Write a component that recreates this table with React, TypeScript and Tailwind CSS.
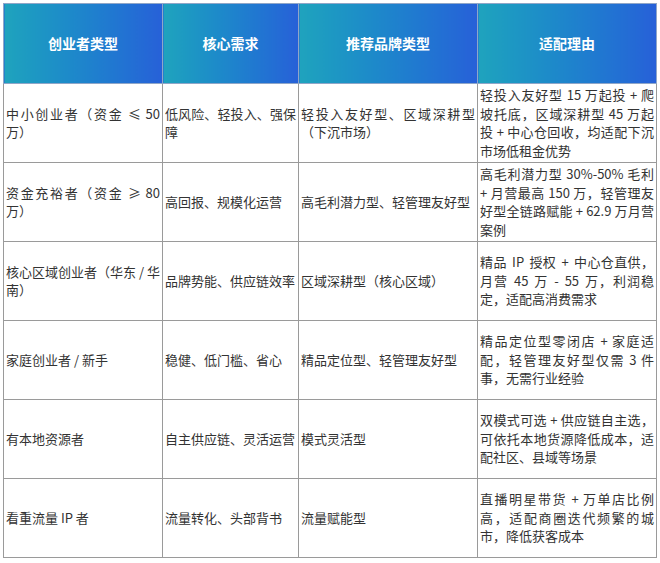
import React from "react";

const rows: string[][] = [
  ["中小创业者（资金 ≤ 50 万）", "低风险、轻投入、强保障", "轻投入友好型、区域深耕型（下沉市场）", "轻投入友好型 15 万起投 + 爬坡托底，区域深耕型 45 万起投 + 中心仓回收，均适配下沉市场低租金优势"],
  ["资金充裕者（资金 ≥ 80 万）", "高回报、规模化运营", "高毛利潜力型、轻管理友好型", "高毛利潜力型 30%-50% 毛利 + 月营最高 150 万，轻管理友好型全链路赋能 + 62.9 万月营案例"],
  ["核心区域创业者（华东 / 华南）", "品牌势能、供应链效率", "区域深耕型（核心区域）", "精品 IP 授权 + 中心仓直供，月营 45 万 - 55 万，利润稳定，适配高消费需求"],
  ["家庭创业者 / 新手", "稳健、低门槛、省心", "精品定位型、轻管理友好型", "精品定位型零闭店 + 家庭适配，轻管理友好型仅需 3 件事，无需行业经验"],
  ["有本地资源者", "自主供应链、灵活运营", "模式灵活型", "双模式可选 + 供应链自主选，可依托本地货源降低成本，适配社区、县域等场景"],
  ["看重流量 IP 者", "流量转化、头部背书", "流量赋能型", "直播明星带货 + 万单店比例高，适配商圈迭代频繁的城市，降低获客成本"],
];

const headers = ["创业者类型", "核心需求", "推荐品牌类型", "适配理由"];

export default function App() {
  return (
    <div className="w-[660px] h-[563px] bg-white pt-[3px] pl-[3px]" style={{ fontFamily: '"Noto Sans CJK SC", "Noto Sans", sans-serif' }}>
      <table className="table-fixed border-collapse w-[653px]">
        <colgroup>
          <col className="w-[159px]" />
          <col className="w-[136px]" />
          <col className="w-[179px]" />
          <col className="w-[179px]" />
        </colgroup>
        <thead>
          <tr className="h-[80px]">
            {headers.map((h) => (
              <th
                key={h}
                className="border border-[#8fa6c8] bg-gradient-to-r from-[#1fa3bd] to-[#2760d8] text-white text-[14px] font-bold text-center align-middle p-0"
              >
                {h}
              </th>
            ))}
          </tr>
        </thead>
        <tbody>
          {rows.map((r, i) => (
            <tr key={i} className="h-[79px]">
              {r.map((c, j) => (
                <td
                  key={j}
                  className={
                    "border border-[#9a9a9a] px-[2px] py-0 align-middle text-[13px] leading-[18.5px] text-[#333333] text-justify" +
                    (i === 2 && j === 3 ? " [word-spacing:2px]" : "")
                  }
                >
                  {c}
                </td>
              ))}
            </tr>
          ))}
        </tbody>
      </table>
    </div>
  );
}
